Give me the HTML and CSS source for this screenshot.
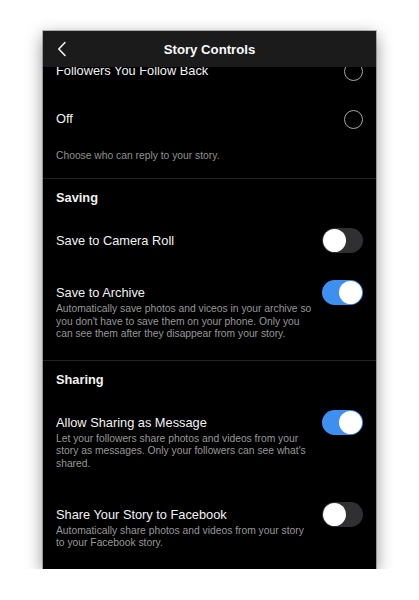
FILE: index.html
```html
<!DOCTYPE html>
<html lang="en">
<head>
<meta charset="utf-8">
<title>Story Controls</title>
<link rel="stylesheet" href="styles.css">
</head>
<body>
<div class="phone">
  <header class="topbar">
    <svg class="back" width="10" height="16" viewBox="0 0 10 16"><polyline points="8,1.5 1.8,8 8,14.5" fill="none" stroke="#f2f2f2" stroke-width="1.6" stroke-linecap="round" stroke-linejoin="round"/></svg>
    <h1 class="title">Story Controls</h1>
  </header>
  <main class="content">
    <div class="radio-row"><span class="label">Followers You Follow Back</span><span class="radio"></span></div>
    <div class="radio-row"><span class="label">Off</span><span class="radio"></span></div>
    <p class="caption">Choose who can reply to your story.</p>

    <section class="section">
      <h2 class="section-title">Saving</h2>
      <div class="toggle-row">
        <div class="text"><div class="label">Save to Camera Roll</div></div>
        <span class="toggle"><span class="knob"></span></span>
      </div>
      <div class="toggle-row">
        <div class="text">
          <div class="label">Save to Archive</div>
          <p class="desc">Automatically save photos and viceos in your archive so<br>you don't have to save them on your phone. Only you<br>can see them after they disappear from your story.</p>
        </div>
        <span class="toggle on"><span class="knob"></span></span>
      </div>
    </section>

    <section class="section">
      <h2 class="section-title">Sharing</h2>
      <div class="toggle-row">
        <div class="text">
          <div class="label">Allow Sharing as Message</div>
          <p class="desc">Let your followers share photos and videos from your<br>story as messages. Only your followers can see what's<br>shared.</p>
        </div>
        <span class="toggle on"><span class="knob"></span></span>
      </div>
      <div class="toggle-row">
        <div class="text">
          <div class="label">Share Your Story to Facebook</div>
          <p class="desc">Automatically share photos and videos from your story<br>to your Facebook story.</p>
        </div>
        <span class="toggle"><span class="knob"></span></span>
      </div>
    </section>
  </main>
</div>
</body>
</html>
```

FILE: styles.css
```css
* { box-sizing: border-box; }
html, body { margin: 0; padding: 0; background: #ffffff; }
body {
  font-family: "Liberation Sans", Arial, sans-serif;
  color: #f4f4f4;
  padding: 31px 0 0 43px;
}
.phone {
  position: relative;
  width: 333px;
  height: 538px;
  background: #000;
  overflow: hidden;
  box-shadow: 0 0 0 1px rgba(0,0,0,0.25), 0 5px 16px rgba(0,0,0,0.45);
}
.topbar {
  position: absolute;
  top: 0; left: 0; right: 0;
  height: 36px;
  background: #1b1b1b;
  display: flex;
  align-items: center;
  justify-content: center;
  z-index: 2;
}
.back { position: absolute; left: 14px; top: 10px; }
.title {
  margin: 0;
  font-size: 13.2px;
  font-weight: 700;
  color: #fafafa;
}
.content { padding: 16px 13px 0 13px; }
.radio-row {
  height: 48px;
  display: flex;
  align-items: center;
  justify-content: space-between;
}
.label { font-size: 12.8px; line-height: 16px; color: #f2f2f2; }
.radio {
  width: 19px; height: 19px;
  border-radius: 50%;
  border: 1.3px solid #a8a8a8;
}
.caption {
  margin: 0 -13px;
  padding: 6px 13px 16px;
  font-size: 10.3px;
  line-height: 13px;
  color: #909090;
  border-bottom: 1px solid #222;
}
.section { border-bottom: 1px solid #222; margin: 0 -13px; padding: 0 13px; }
.section:last-child { border-bottom: none; }
.section-title {
  margin: 0;
  padding: 11px 0 10px;
  font-size: 12.8px;
  line-height: 16px;
  font-weight: 700;
  color: #f2f2f2;
}
.toggle-row {
  display: flex;
  justify-content: space-between;
  align-items: flex-start;
  padding: 17px 0 19px;
}
.desc {
  margin: 2px 0 0;
  font-size: 10.3px;
  line-height: 12.6px;
  color: #979797;
}
.toggle {
  flex: none;
  position: relative;
  width: 41px; height: 25px;
  border-radius: 13px;
  background: #303032;
  margin: -5px 0 -4px;
}
.toggle .knob {
  position: absolute;
  top: 1px; left: 1px;
  width: 23px; height: 23px;
  border-radius: 50%;
  background: #fff;
}
.toggle.on { background: #3d8ff0; }
.toggle.on .knob { left: 17px; }
```
